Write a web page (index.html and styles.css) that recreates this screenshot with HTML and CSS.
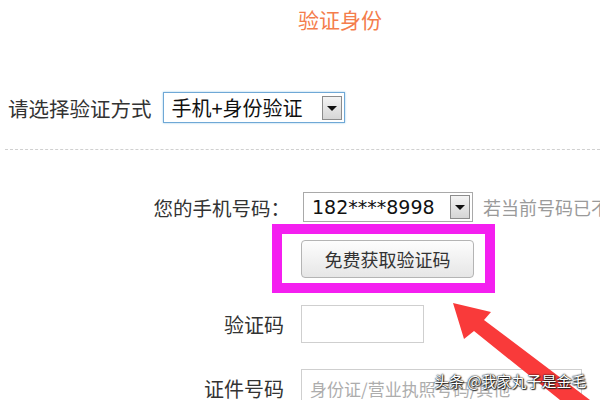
FILE: index.html
```html
<!DOCTYPE html>
<html>
<head>
    <title>验证身份</title>
    <link rel="stylesheet" href="styles.css">
</head>
<body>
    <div class="page">
        <h1 class="title">验证身份</h1>

        <div class="method-row">
            <span class="method-label">请选择验证方式</span>
            <div class="select method-select">
                <span class="select-value">手机+身份验证</span>
                <span class="select-arrow"></span>
            </div>
        </div>

        <div class="divider"></div>

        <div class="form">
            <div class="form-row phone-row">
                <label class="form-label">您的手机号码：</label>
                <div class="select phone-select">
                    <span class="select-value">182****8998</span>
                    <span class="select-arrow"></span>
                </div>
                <span class="hint">若当前号码已不可用，请选择其他方式</span>
            </div>

            <div class="form-row button-row">
                <span class="form-label"></span>
                <div class="highlight">
                    <button class="code-button">免费获取验证码</button>
                </div>
            </div>

            <div class="form-row code-row">
                <label class="form-label">验证码</label>
                <input class="text-input code-input" type="text">
            </div>

            <div class="form-row id-row">
                <label class="form-label">证件号码</label>
                <input class="text-input id-input" type="text" placeholder="身份证/营业执照号码/其他">
            </div>
        </div>

        <!-- annotation arrow -->
        <svg class="arrow" width="600" height="400" viewBox="0 0 600 400">
            <polygon points="453,303 491,312 484,320 590,400 560,400 474,331 464,339" fill="#f93a3a"/>
        </svg>

        <div class="watermark">头条 @我家丸子是金毛</div>
    </div>
</body>
</html>
```

FILE: styles.css
```css
body {
    margin: 0;
    padding: 0;
    background: #fff;
    font-family: "Noto Sans CJK SC", "Noto Sans", sans-serif;
    color: #333;
    overflow: hidden;
}

.page {
    position: relative;
    width: 600px;
    height: 400px;
    overflow: hidden;
}

.title {
    margin: 0;
    padding: 6px 0 0 298px;
    font-size: 21px;
    font-weight: normal;
    line-height: 26px;
    height: 26px;
    color: #f47d4c;
}

.method-row {
    display: flex;
    align-items: center;
    margin-top: 60px;
    padding-left: 8px;
    gap: 11px;
    height: 31px;
}

.method-label {
    font-size: 20.5px;
    color: #333;
}

.select {
    display: flex;
    flex: none;
    align-items: center;
    box-sizing: border-box;
    height: 30px;
    background: #fff;
    border: 1px solid #a9a9a9;
}

.method-select {
    width: 182px;
    height: 31px;
    border-color: #6fa8d6;
    box-shadow: 0 0 2px #9ccbe8;
}

.select-value {
    flex: 1;
    min-width: 0;
    padding-left: 8px;
    font-size: 20px;
    color: #111;
    white-space: nowrap;
}

.select-arrow {
    position: relative;
    flex: none;
    width: 20px;
    height: 24px;
    margin-right: 2px;
    box-sizing: border-box;
    border: 1px solid #8c8c8c;
    background: linear-gradient(#f4f4f4, #d6d6d6);
}

.select-arrow::after {
    content: "";
    position: absolute;
    left: 4px;
    top: 9px;
    border-left: 5px solid transparent;
    border-right: 5px solid transparent;
    border-top: 5px solid #111;
}

.divider {
    margin: 26px 0 0 5px;
    border-top: 1px dashed #d0d0d0;
}

.form {
    margin-top: 42px;
}

.form-row {
    display: flex;
    align-items: center;
}

.form-label {
    flex: none;
    width: 284px;
    margin-right: 17px;
    text-align: right;
    font-size: 20px;
    color: #333;
}

.phone-row {
    height: 30px;
}

.phone-row .form-label {
    width: 290px;
    margin-right: 13px;
    font-size: 19.5px;
}

.phone-select {
    width: 170px;
}

.phone-select .select-value {
    font-family: "DejaVu Sans", sans-serif;
    font-size: 19px;
    padding-left: 8px;
}

.hint {
    flex: none;
    margin-left: 10px;
    font-size: 18px;
    color: #9a9a9a;
    white-space: nowrap;
}

.button-row {
    margin-top: 18px;
}

.highlight {
    position: relative;
}

/* magenta annotation frame */
.highlight::before {
    content: "";
    position: absolute;
    left: -29px;
    top: -16px;
    right: -21px;
    bottom: -15px;
    border: 10px solid #f41ff0;
}

.code-button {
    display: block;
    width: 173px;
    height: 38px;
    padding: 0;
    border: 1px solid #b4b4b4;
    border-radius: 4px;
    background: linear-gradient(#fdfdfd, #e6e6e6);
    font-family: "Noto Sans CJK SC", sans-serif;
    font-size: 18px;
    color: #333;
}

.text-input {
    box-sizing: border-box;
    height: 38px;
    border: 1px solid #cfcfcf;
    padding: 0 8px;
    font-family: "Noto Sans CJK SC", sans-serif;
    font-size: 17px;
    outline: none;
}

.code-row {
    margin-top: 27px;
}

.code-input {
    width: 123px;
}

.id-row {
    margin-top: 26px;
}

.id-input {
    width: 281px;
}

.id-input::placeholder {
    color: #adadad;
}

.arrow {
    position: absolute;
    left: 0;
    top: 0;
    pointer-events: none;
}

.watermark {
    position: absolute;
    left: 434px;
    top: 370px;
    font-size: 15px;
    color: #fff;
    white-space: nowrap;
    text-shadow: 0 0 2px #000, 0 0 1px #000, 1px 1px 1px #333;
}
```
